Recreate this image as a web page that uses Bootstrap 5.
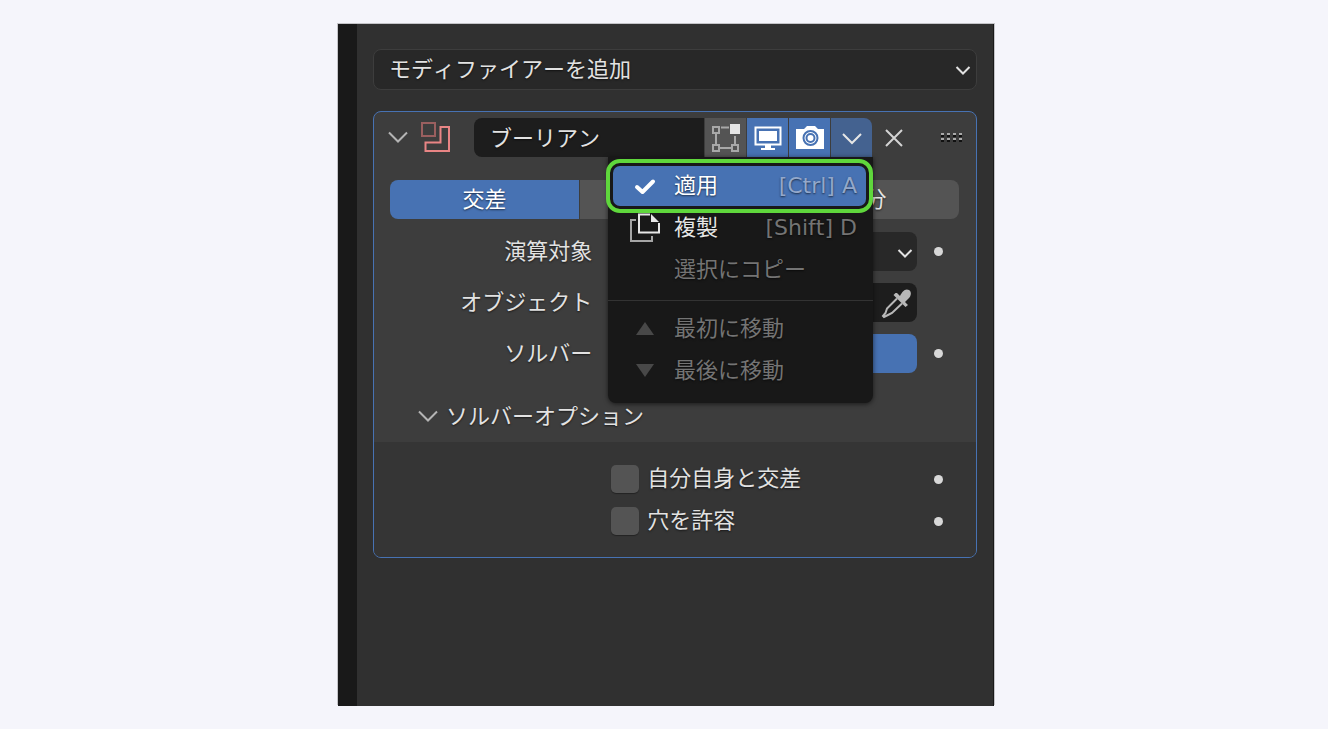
<!DOCTYPE html>
<html lang="ja">
<head>
<meta charset="utf-8">
<meta name="viewport" content="width=device-width, initial-scale=1">
<title>モディファイアー</title>
<link href="https://cdn.jsdelivr.net/npm/bootstrap@5.3.0/dist/css/bootstrap.min.css" rel="stylesheet">
<style>
  :root { --blue: #4772b3; --dark: #1d1d1d; --menu: #181818; --ink: #e2e2e2; --ctl: 39px; }
  body {
    background: #f5f5fb; color: var(--ink); padding: 24px 0 23px 4px;
    font: 22px/32px "DejaVu Sans", "Noto Sans CJK JP", sans-serif;
    font-kerning: none;
  }
  button, select, input { font: inherit; font-kerning: none; color: inherit; border: 0; text-shadow: inherit; }
  svg { display: block; flex: none; fill: none; }
  .editor { width: 100%; max-width: 656px; background: #303030; border-left: 19px solid #191919; border-right: 1px solid #191919; box-shadow: 1px -1px 0 #c4c4c8, -1px -1px 0 #c4c4c8; padding: 25px 16px; text-shadow: 0 1px 2px rgba(0,0,0,.6); }
  .add-mod { height: 41px; background: #282828; border: 1px solid #3d3d3d; border-radius: 8px; padding: 0 5px 0 15px; }
  .mod { margin-top: 21px; background: #3d3d3d; border: 1px solid var(--blue); border-radius: 8px; }
  .mod-head { padding: 6px 14px 0 14px; }
  .plain { background: none; padding: 0; }
  .kind { margin-left: 12px; }
  .name-group { margin-left: 22px; gap: 1px; min-width: 0; }
  .name-group > button, .name-group > input { height: var(--ctl); }
  .name-group > button { width: 41px; flex: none; padding: 0; display: grid; place-items: center; background: var(--blue); }
  .name-group > input { flex: 1 1 0; width: 0; min-width: 0; background: var(--dark); border-radius: 8px 0 0 8px; padding: 0 16px 4px; }
  .name-group > .edit-mode { background: #545454; }
  .name-group > .menu-btn { background: #446290; border-radius: 0 8px 0 0; }
  .close-mod { margin-left: 13px; }
  .grip { margin: 0 0 0 37px; }
  .seg { gap: 1px; }
  .seg > button { flex: 1 1 0; height: var(--ctl); background: #545454; padding: 0; }
  .seg > button:first-child { border-radius: 8px 0 0 8px; }
  .seg > button:last-child { border-radius: 0 8px 8px 0; }
  .seg > .on { background: var(--blue); color: #fff; }
  .mod-main { padding: 23px 17px 28px 16px; }
  .prop { display: grid; grid-template-columns: minmax(0, 21fr) minmax(0, 29fr) 42px; align-items: center; }
  .props { display: grid; gap: 12px; margin-top: 13px; }
  .prop > label, .prop > .cap { text-align: right; padding-right: 19px; }
  .field { display: flex; height: var(--ctl); border-radius: 8px; background: var(--dark); }
  .field select, .field input { flex: 1 1 0; width: 0; min-width: 0; appearance: none; background: none; padding: 0 10px; }
  .field.pick { background: #282828; }
  .field.pick svg { pointer-events: none; margin: 16px 4px 0 0; }
  .dot { width: 9px; height: 9px; border-radius: 50%; background: #d8d8d8; justify-self: center; padding: 0; }
  .sub-head { padding: 0 17px 9px 44px; }
  .sub-body { background: #353535; border-radius: 0 0 7px 7px; padding: 21px 17px 20px 16px; }
  .sub-body .prop { height: 32px; }
  .sub-body .prop + .prop { margin-top: 10px; }
  .tick { appearance: none; width: 28px; height: 28px; margin: 0; border-radius: 5px; background: #545454; box-shadow: 0 1px 1px rgba(0,0,0,.35); }
  .mod-menu { --bs-dropdown-bg: var(--menu); top: 100%; right: -1px; width: 265px; padding: 9px 7px 12px 5px; gap: 2px; border: 0; border-radius: 0 0 8px 8px; font-size: 22px; box-shadow: 0 1px 5px rgba(0,0,0,.6); }
  .mod-menu.show { display: flex; }
  .mod-menu li > button { height: 40px; padding: 0 9px 0 16px; display: flex; align-items: center; color: #e6e6e6; border-radius: 7px; }
  .mod-menu li > button span { margin-left: 13px; }
  .mod-menu kbd { margin-left: auto; padding: 0; background: none; font: inherit; color: #747474; }
  .mod-menu li > button:disabled { color: #747474; }
  .mod-menu li > .active { background: var(--blue); color: #fff; outline: 4px solid #5fd73c; outline-offset: 3px; }
  .mod-menu .active kbd { color: #93a8cb; }
  .mod-menu .rule { height: 1px; background: #333; margin: 8px -7px 6px -5px; }
</style>
</head>
<body class="min-vh-100 d-flex justify-content-center">
<main class="editor">
  <button class="add-mod w-100 d-flex align-items-center justify-content-between" type="button">モディファイアーを追加
    <svg width="16" height="12" viewBox="0 0 16 12" stroke="#e2e2e2" stroke-width="2"><path d="M1.500 3 8 9.500 14.500 3"/></svg>
  </button>

  <section class="mod">
    <header class="mod-head d-flex align-items-center">
      <button class="plain" type="button" aria-label="折りたたむ"><svg width="20" height="14" viewBox="0 0 20 14" stroke="#b4b4b4" stroke-width="2"><path d="M1 1.500 10 10.500 19 1.500"/></svg></button>
      <svg class="kind" width="32" height="32" viewBox="0 0 32 32" stroke-width="2"><path d="M2 1h13v13H2z" stroke="#9a5f5f"/><path d="M20.500 5h8.500v24H5.500v-8.500h15z" stroke="#e98585"/></svg>
      <div class="name-group d-flex flex-grow-1 position-relative">
        <input type="text" value="ブーリアン" aria-label="名前">
        <button class="edit-mode" type="button" aria-label="編集モード">
          <svg width="30" height="30" viewBox="0 0 30 30" stroke="#a8a8a8" stroke-width="2"><path d="M2 4h6v6H2zM2 22h6v6H2zM21 22h6v6h-6zM5 10v12M8 25h13M10 4.500h8M24 13v9"/><path d="M19 1h10v10H19z" fill="#e6e6e6" stroke="none"/></svg>
        </button>
        <button type="button" aria-label="リアルタイム">
          <svg width="28" height="26" viewBox="0 0 28 26"><path d="M1.500 2.500h25v17h-25z" stroke="#fff" stroke-width="2"/><path d="M5 6h18v10H5zM11 20h6v3h4v2H7v-2h4z" fill="#fff"/></svg>
        </button>
        <button type="button" aria-label="レンダー">
          <svg width="28" height="26" viewBox="0 0 28 26"><path d="M0 4h8l3-3h8l3 3h6v20H0z" fill="#fff"/><circle cx="14.500" cy="13" r="7" stroke="#4772b3" stroke-width="2"/><circle cx="14.500" cy="13" r="4" stroke="#4772b3" stroke-width="2"/></svg>
        </button>
        <button class="menu-btn" type="button" aria-label="メニュー" aria-expanded="true">
          <svg width="20" height="14" viewBox="0 0 20 14" stroke="#e6e6e6" stroke-width="2"><path d="M1 3 10 12 19 3"/></svg>
        </button>
        <ul class="dropdown-menu mod-menu show flex-column">
          <li><button class="dropdown-item active" type="button">
            <svg width="32" height="32" viewBox="0 0 32 32" stroke="#fff" stroke-width="4" stroke-linecap="round" stroke-linejoin="round"><path d="M8 17 13.500 22 24 11.500"/></svg>
            <span>適用</span><kbd>[Ctrl] A</kbd></button></li>
          <li><button class="dropdown-item" type="button">
            <svg width="32" height="32" viewBox="0 0 32 32" stroke-width="2"><path d="M7 8H2v21h21v-5" stroke="#a5a5a5"/><path d="M21 2.500H10v18h20V11" stroke="#e6e6e6"/><path d="M22 2v8h8z" fill="#e6e6e6"/></svg>
            <span>複製</span><kbd>[Shift] D</kbd></button></li>
          <li><button class="dropdown-item" type="button" disabled><svg width="32" height="32"></svg><span>選択にコピー</span></button></li>
          <li class="rule"></li>
          <li><button class="dropdown-item" type="button" disabled><svg width="32" height="32" viewBox="0 0 32 32"><path d="M7 22h18L16 9z" fill="#484848"/></svg><span>最初に移動</span></button></li>
          <li><button class="dropdown-item" type="button" disabled><svg width="32" height="32" viewBox="0 0 32 32"><path d="M7 9h18L16 22z" fill="#484848"/></svg><span>最後に移動</span></button></li>
        </ul>
      </div>
      <button class="plain close-mod" type="button" aria-label="削除"><svg width="18" height="18" viewBox="0 0 18 18" stroke="#d4d4d4" stroke-width="2"><path d="m1 1 16 16M17 1 1 17"/></svg></button>
      <svg class="grip" width="22" height="12" viewBox="0 0 22 12" stroke-width="2" stroke-dasharray="3 3"><path d="M1 2h21M1 7h21" stroke="#aaa"/><path d="M1 4h21M1 9h21" stroke="#111"/></svg>
    </header>

    <div class="mod-main">
      <div class="seg d-flex"><button class="on" type="button">交差</button><button type="button" aria-label="統合"></button><button type="button">差分</button></div>
      <div class="props">
        <div class="prop"><label for="operand">演算対象</label>
          <div class="field pick"><select id="operand"><option></option></select><svg width="16" height="12" viewBox="0 0 16 12" stroke="#e2e2e2" stroke-width="2"><path d="M1.500 2 8 8.500 14.500 2"/></svg></div>
          <button class="dot" type="button" aria-label="アニメート"></button></div>
        <div class="prop"><label for="object">オブジェクト</label>
          <div class="field"><input id="object" type="text"><button class="plain me-1" type="button" aria-label="スポイト">
            <svg width="34" height="34" viewBox="0 0 34 34"><path d="M18 7 21 10C23 6 26 2 30 4 33 6 32 10 30 12L26 16 29 19 26.500 21 14.500 9 16.500 7z" fill="#b8b8b8"/><path d="M18 12.500 8 22.500 6.500 27 4 30l1 1 4-2 4-2 10-9.500" stroke="#b8b8b8" stroke-width="2"/></svg></button></div></div>
        <div class="prop"><span class="cap">ソルバー</span>
          <div class="seg d-flex"><button type="button" aria-label="高速"></button><button class="on" type="button" aria-label="正確"></button></div>
          <button class="dot" type="button" aria-label="アニメート"></button></div>
      </div>
    </div>

    <div class="sub-head">
      <button class="plain d-flex align-items-center" type="button"><svg class="me-2" width="20" height="14" viewBox="0 0 20 14" stroke="#b4b4b4" stroke-width="2"><path d="M1 1.500 10 10.500 19 1.500"/></svg>ソルバーオプション</button>
    </div>
    <div class="sub-body">
      <div class="prop"><span></span><label class="d-flex align-items-center gap-2 text-start p-0" for="self"><input class="tick" id="self" type="checkbox">自分自身と交差</label><button class="dot" type="button" aria-label="アニメート"></button></div>
      <div class="prop"><span></span><label class="d-flex align-items-center gap-2 text-start p-0" for="hole"><input class="tick" id="hole" type="checkbox">穴を許容</label><button class="dot" type="button" aria-label="アニメート"></button></div>
    </div>
  </section>
</main>
<script src="https://cdn.jsdelivr.net/npm/bootstrap@5.3.0/dist/js/bootstrap.bundle.min.js"></script>
</body>
</html>
